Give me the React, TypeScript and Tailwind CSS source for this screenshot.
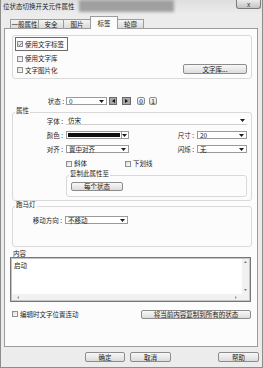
import React from 'react';

function Caret() {
  return (
    <svg width="5" height="3" viewBox="0 0 5 3" className="shrink-0">
      <path d="M0 0H5L2.5 3Z" fill="#1a1a1a" />
    </svg>
  );
}

function Combo({ value, className }: { value: string; className: string }) {
  return (
    <div className={`h-[8px] bg-white border border-[#9a9a9a] flex items-center pl-[2px] pr-[2px] ${className}`}>
      <span className="flex-1 leading-none">{value}</span>
      <Caret />
    </div>
  );
}

function Box({ checked = false }: { checked?: boolean }) {
  return (
    <span className="w-[6px] h-[6px] shrink-0 border border-[#8f8f8f] bg-gradient-to-br from-[#dcdcdc] to-white flex items-center justify-center">
      {checked && (
        <svg width="5" height="5" viewBox="0 0 5 5">
          <path d="M0.5 2.6L2 4.1L4.6 0.6" stroke="#4a4a4a" strokeWidth="0.9" fill="none" />
        </svg>
      )}
    </span>
  );
}

function Btn({ children, className }: { children?: React.ReactNode; className: string }) {
  return (
    <div className={`border border-[#8c8c8c] rounded-[2px] bg-gradient-to-b from-[#f8f8f8] to-[#dcdcdc] flex items-center justify-center leading-none ${className}`}>
      {children}
    </div>
  );
}

function Group({ label, className, children }: { label?: string; className: string; children?: React.ReactNode }) {
  return (
    <div className={`relative border border-[#d9d9d9] rounded-[3px] ${className}`}>
      {label && (
        <span className="absolute left-[2px] top-[-6px] px-[1px] bg-[#fcfcfc] leading-none">{label}</span>
      )}
      {children}
    </div>
  );
}

function Tab({ label, active = false, className }: { label: string; active?: boolean; className: string }) {
  return (
    <div
      className={`border border-b-0 border-[#9c9c9c] flex items-center justify-center leading-none ${
        active ? 'h-[13px] bg-[#fcfcfc] relative z-10 -mb-px' : 'h-[9px] bg-gradient-to-b from-[#f4f4f4] to-[#dadada]'
      } ${className}`}
    >
      {label}
    </div>
  );
}

export default function App() {
  return (
    <div className="w-[263px] h-[368px] bg-[#ececec] border-x border-b border-[#8d8d8d] flex flex-col overflow-hidden text-[6.5px] text-[#1c1c1c] font-['Noto_Sans_CJK_SC','Noto_Sans',sans-serif]">
      {/* title bar */}
      <div className="h-[13px] flex items-start bg-gradient-to-b from-[#dedede] to-[#ebebeb]">
        <span className="pl-[2px] pt-[3px] leading-none">位状态切换开关元件属性</span>
        <div className="ml-[4px] w-[95px] h-[12px] bg-[#8f8f8f] blur-[1.5px] opacity-80" />
        <div className="ml-auto mr-[1px] w-[25px] h-[9px] border border-t-0 border-[#7a7a7a] rounded-b-[3px] bg-gradient-to-b from-[#ececec] to-[#c4c4c4] flex items-center justify-center leading-none text-[#333]">
          x
        </div>
      </div>

      {/* tabs */}
      <div className="h-[15px] flex items-end pl-[9px]">
        <Tab label="一般属性" className="w-[29px]" />
        <Tab label="安全" className="w-[26px] -ml-px" />
        <Tab label="图片" className="w-[28px] -ml-px" />
        <Tab label="标签" active className="w-[28px] -ml-px" />
        <Tab label="轮廓" className="w-[27px] -ml-px" />
      </div>

      {/* tab panel */}
      <div className="ml-[3px] w-[254px] h-[319px] border border-[#9c9c9c] bg-[#fcfcfc] flex flex-col">
        <Group className="ml-[7px] mt-[6px] w-[240px] h-[44px] flex flex-col">
          <div className="ml-[2px] mt-[1px] w-[53px] h-[14px] border border-[#6c6c6c] flex items-center pl-[1px] gap-[2px]">
            <Box checked />
            <span className="leading-none">使用文字标签</span>
          </div>
          <div className="ml-[4px] mt-[4px] h-[7px] flex items-center gap-[2px]">
            <Box />
            <span className="leading-none">使用文字库</span>
          </div>
          <div className="mt-[2px] h-[10px] flex items-center justify-between pl-[4px] pr-[4px]">
            <div className="flex items-center gap-[2px] mt-[2px]">
              <Box />
              <span className="leading-none">文字图片化</span>
            </div>
            <Btn className="w-[64px] h-[10px]">文字库...</Btn>
          </div>
        </Group>

        {/* status row */}
        <div className="mt-[18px] h-[8px] flex items-center">
          <span className="w-[59px] text-right leading-none">状态 :</span>
          <Combo value="0" className="ml-[2px] w-[41px]" />
          <div className="ml-[2px] w-[8px] h-[8px] border border-[#6a6a6a] bg-[#a8a8a8] flex items-center justify-center">
            <svg width="3" height="4" viewBox="0 0 3 4"><path d="M3 0V4L0 2Z" fill="#111" /></svg>
          </div>
          <div className="ml-[5px] w-[9px] h-[8px] border border-[#6a6a6a] bg-[#a8a8a8] flex items-center justify-center">
            <svg width="3" height="4" viewBox="0 0 3 4"><path d="M0 0V4L3 2Z" fill="#111" /></svg>
          </div>
          <Btn className="ml-[6px] w-[8px] h-[8px]">0</Btn>
          <Btn className="ml-[4px] w-[8px] h-[8px]">1</Btn>
        </div>

        {/* 属性 */}
        <Group label="属性" className="ml-[7px] mt-[7px] w-[240px] h-[89px] flex flex-col">
          <div className="mt-[4px] h-[8px] flex items-center">
            <span className="w-[50px] text-right leading-none">字体 :</span>
            <div className="ml-[3px] w-[181px] h-[8px] bg-white border-b border-[#d0d0d0] flex items-center pl-[2px] pr-[2px]">
              <span className="flex-1 leading-none">仿宋</span>
              <Caret />
            </div>
          </div>
          <div className="mt-[6px] h-[8px] flex items-center">
            <span className="w-[50px] text-right leading-none">颜色 :</span>
            <div className="ml-[3px] w-[63px] h-[8px] bg-white border border-[#9a9a9a] flex items-center pl-[1px] pr-[1px]">
              <div className="w-[52px] h-[4px] bg-[#111]" />
              <div className="ml-[1px] h-full border-l border-[#9a9a9a] flex-1 flex items-center justify-center">
                <Caret />
              </div>
            </div>
            <span className="w-[65px] text-right leading-none">尺寸 :</span>
            <Combo value="20" className="ml-[3px] w-[50px]" />
          </div>
          <div className="mt-[6px] h-[8px] flex items-center">
            <span className="w-[50px] text-right leading-none">对齐 :</span>
            <Combo value="置中对齐" className="ml-[3px] w-[63px]" />
            <span className="w-[65px] text-right leading-none">闪烁 :</span>
            <Combo value="无" className="ml-[3px] w-[50px]" />
          </div>
          <div className="mt-[7px] h-[7px] flex items-center ml-[53px]">
            <div className="w-[59px] flex items-center gap-[2px]">
              <Box />
              <span className="leading-none">斜体</span>
            </div>
            <div className="flex items-center gap-[2px]">
              <Box />
              <span className="leading-none">下划线</span>
            </div>
          </div>
          <Group label="复制此属性至" className="ml-[53px] mt-[8px] w-[181px] h-[22px] flex flex-col">
            <Btn className="ml-[4px] mt-[6px] w-[52px] h-[9px]">每个状态</Btn>
          </Group>
        </Group>

        {/* 跑马灯 */}
        <Group label="跑马灯" className="ml-[7px] mt-[5px] w-[240px] h-[41px] flex flex-col">
          <div className="mt-[9px] h-[8px] flex items-center">
            <span className="w-[49px] text-right leading-none">移动方向 :</span>
            <Combo value="不移动" className="ml-[3px] w-[63px]" />
          </div>
        </Group>

        {/* 内容 */}
        <div className="ml-[8px] mt-[3px] h-[7px] leading-[7px]">内容</div>
        <div className="ml-[5px] w-[241px] h-[45px] border border-[#777] shadow-[inset_0_0_0_1px_#c4c4c4] bg-white flex flex-col p-px">
          <div className="flex-1 flex">
            <div className="flex-1 pl-[2px] pt-[3px] leading-none">启动</div>
            <div className="w-[7px] bg-[#f1f1f1] flex flex-col items-center justify-between pt-[2px] pb-[3px]">
              <svg width="3" height="2" viewBox="0 0 3 2"><path d="M0 2H3L1.5 0Z" fill="#777" /></svg>
              <svg width="3" height="2" viewBox="0 0 3 2"><path d="M0 0H3L1.5 2Z" fill="#777" /></svg>
            </div>
          </div>
          <div className="h-[6px] bg-[#f1f1f1] flex items-center justify-between pl-[5px] pr-[12px]">
            <svg width="2" height="3" viewBox="0 0 2 3"><path d="M2 0V3L0 1.5Z" fill="#999" /></svg>
            <svg width="2" height="3" viewBox="0 0 2 3"><path d="M0 0V3L2 1.5Z" fill="#999" /></svg>
          </div>
        </div>

        <div className="mt-[7px] h-[10px] flex items-center pl-[7px] pr-[6px]">
          <Box />
          <span className="ml-[2px] leading-none">编辑时文字位置连动</span>
          <Btn className="ml-auto w-[110px] h-[9px]">将当前内容复制到所有的状态</Btn>
        </div>
      </div>

      {/* dialog buttons */}
      <div className="mt-[5px] h-[10px] flex items-center">
        <Btn className="ml-[84px] w-[40px] h-[10px]">确定</Btn>
        <Btn className="ml-[5px] w-[41px] h-[10px]">取消</Btn>
        <Btn className="ml-[47px] w-[41px] h-[10px]">帮助</Btn>
      </div>
    </div>
  );
}
